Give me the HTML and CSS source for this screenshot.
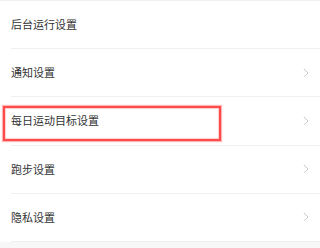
FILE: index.html
```html
<!DOCTYPE html>
<html lang="zh-CN">
<head>
<meta charset="utf-8">
<link rel="stylesheet" href="styles.css">
</head>
<body>
<ul class="list">
  <li class="row"><span class="label">后台运行设置</span></li>
  <li class="row"><span class="label">通知设置</span><svg class="chev" viewBox="0 0 6 10" width="6" height="10"><path d="M0.8 0.8 L5 5 L0.8 9.2" /></svg></li>
  <li class="row"><span class="label">每日运动目标设置</span><svg class="chev" viewBox="0 0 6 10" width="6" height="10"><path d="M0.8 0.8 L5 5 L0.8 9.2" /></svg><div class="mark"></div></li>
  <li class="row"><span class="label">跑步设置</span><svg class="chev" viewBox="0 0 6 10" width="6" height="10"><path d="M0.8 0.8 L5 5 L0.8 9.2" /></svg></li>
  <li class="row"><span class="label">隐私设置</span><svg class="chev" viewBox="0 0 6 10" width="6" height="10"><path d="M0.8 0.8 L5 5 L0.8 9.2" /></svg></li>
</ul>
</body>
</html>
```
FILE: styles.css
```css
html, body {
  margin: 0;
  padding: 0;
  background: #f7f7f7;
}
body {
  width: 320px;
  height: 248px;
  overflow: hidden;
  font-family: "Noto Sans CJK SC", "Noto Sans", sans-serif;
}
.list {
  list-style: none;
  margin: 0;
  padding: 0;
  background: #fff;
  border-top: 1px solid #f2f2f2;
}
.row {
  position: relative;
  height: 47.2px;
  display: flex;
  align-items: center;
  padding: 0 11px;
  background: #fff;
}
.row::after {
  content: "";
  position: absolute;
  left: 11px;
  right: 0;
  bottom: -1px;
  height: 1px;
  background: #efefef;
}
.row + .row {
  margin-top: 1px;
}
.list {
  padding-bottom: 1px;
}
.label {
  flex: 1;
  font-size: 11px;
  color: #333;
  line-height: 1;
}
.chev {
  margin-right: 0;
  fill: none;
  stroke: #c9c9c9;
  stroke-width: 1;
}
.mark {
  position: absolute;
  left: 3px;
  top: 9px;
  width: 214px;
  height: 31px;
  border: 2px solid #ff4b4b;
  box-shadow: 0 0 1px 1px rgba(255, 90, 90, 0.45), inset 0 0 1px 1px rgba(255, 90, 90, 0.3);
}
```
